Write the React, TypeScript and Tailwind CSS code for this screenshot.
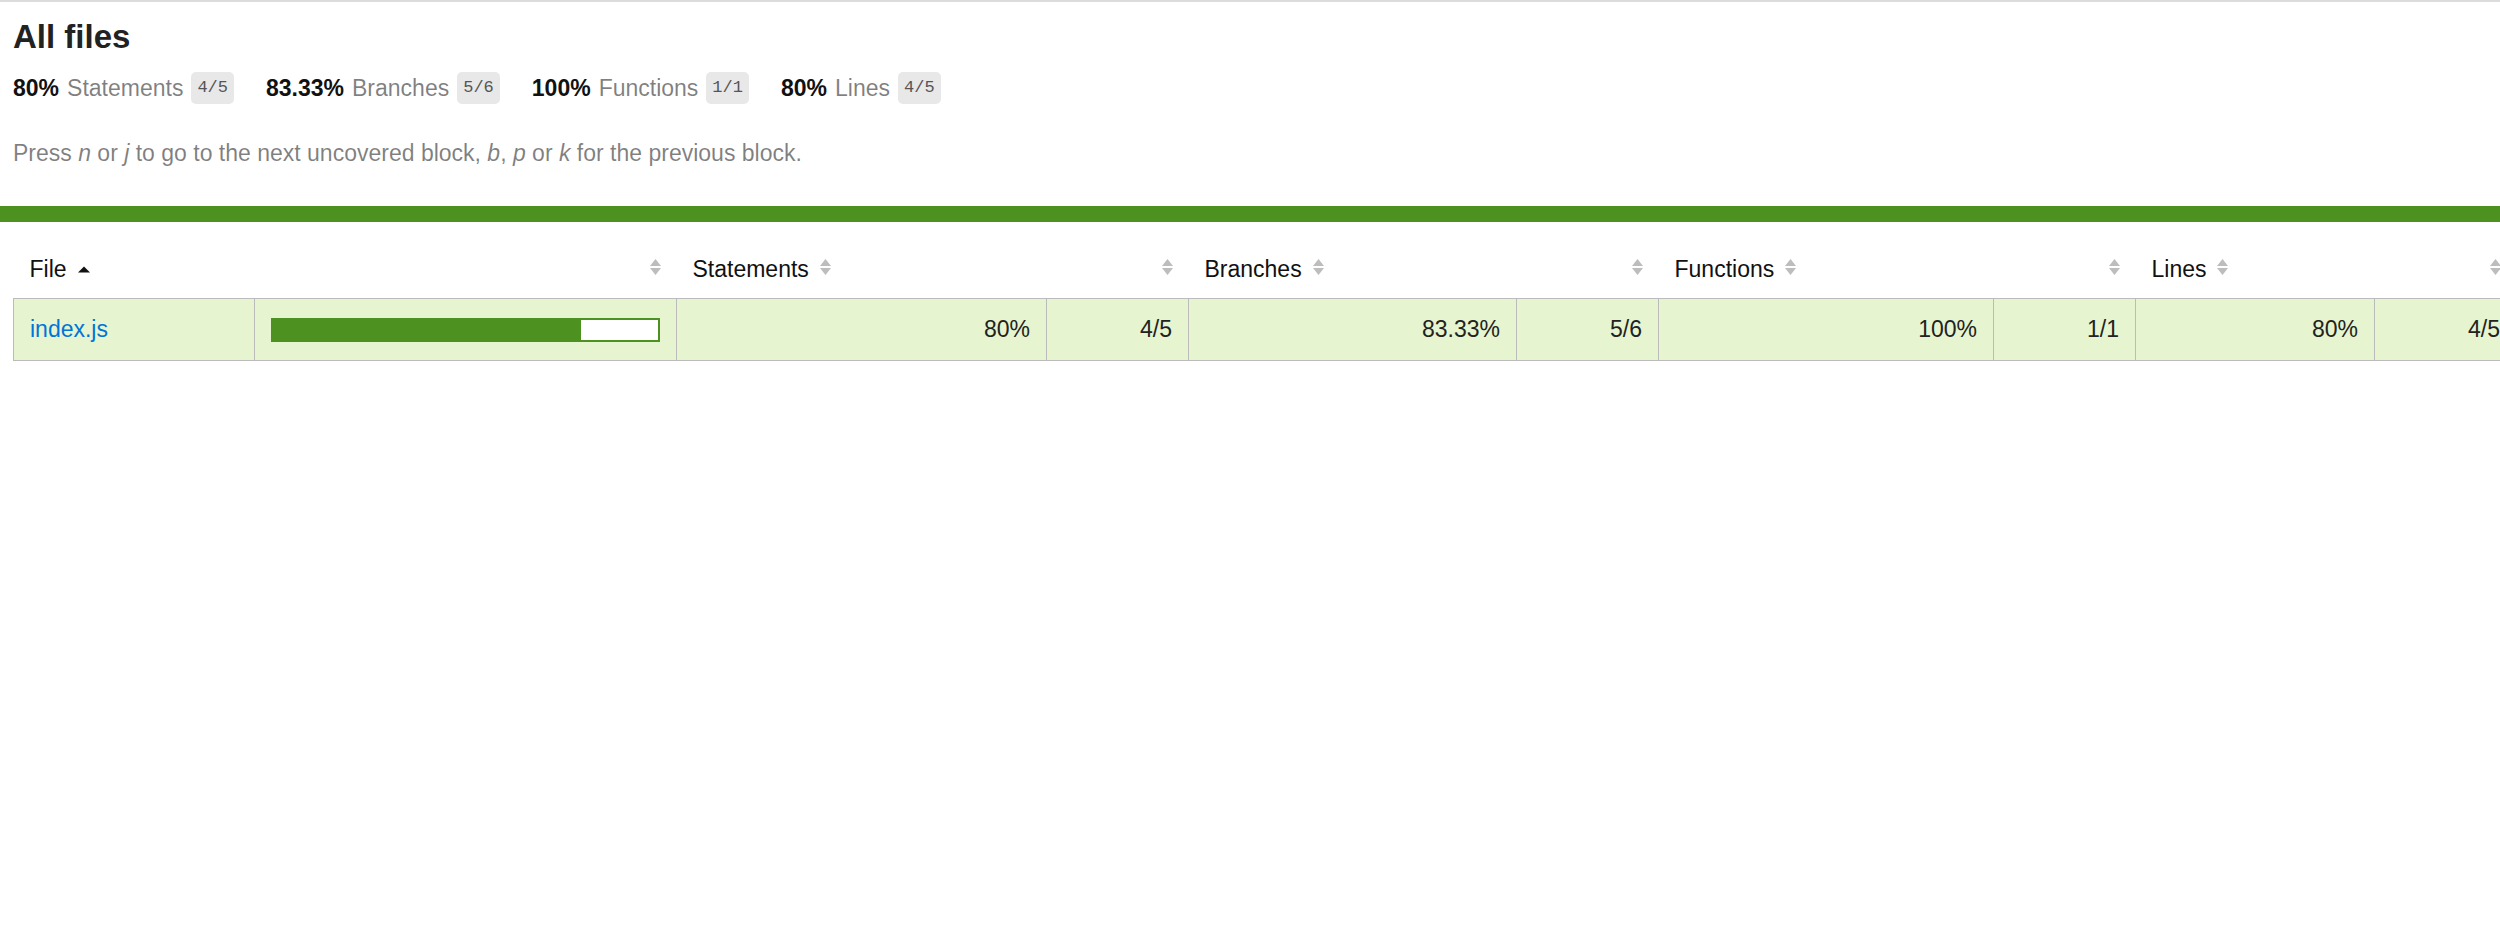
import React from "react";

function Sorter({ active }: { active?: boolean }) {
  if (active) {
    return (
      <svg width="12" height="16" viewBox="0 0 12 16" className="inline-block ml-[11px] align-[2px]">
        <path d="M6 7.5 L12 13.5 L0 13.5 Z" fill="#111" />
      </svg>
    );
  }
  return (
    <svg width="11" height="16" viewBox="0 0 11 16" className="inline-block ml-[11px] align-[2px]">
      <path d="M5.5 0 L11 7 L0 7 Z" fill="#bdbdbd" />
      <path d="M0 9 L11 9 L5.5 16 Z" fill="#bdbdbd" />
    </svg>
  );
}

function Stat({ pct, label, frac }: { pct: string; label: string; frac: string }) {
  return (
    <div className="flex items-center gap-[8px] pr-[32px] h-[32px]">
      <span className="font-bold text-[#111] leading-[26px]">{pct}</span>
      <span className="text-black/50 leading-[26px]">{label}</span>
      <span className="h-[32px] px-[6px] rounded-[5px] bg-[#e8e8e8] text-[#555] text-[17px] leading-[32px] font-['Liberation_Mono',monospace]">
        {frac}
      </span>
    </div>
  );
}

export default function App() {
  const th = "py-[16px] px-[16px] leading-[26px] font-normal whitespace-nowrap text-[#111]";
  const td = "py-[17px] px-[16px] leading-[27px] border-r border-[#bbb] bg-[#e6f5d0] text-[#222] whitespace-nowrap";
  const tdr = td + " text-right";
  return (
    <div className="w-[2500px] min-h-[930px] overflow-hidden bg-white border-t-2 border-[#dcdcdc] font-['Liberation_Sans',Arial,sans-serif] text-[23px] text-[#333]">
      <div className="pl-[13px] pt-[16px] pb-[40px]">
        <h1 className="text-[33px] leading-[38px] font-bold text-[#222]">All files</h1>
        <div className="flex pt-[16px] pb-[16px]">
          <Stat pct="80%" label="Statements" frac="4/5" />
          <Stat pct="83.33%" label="Branches" frac="5/6" />
          <Stat pct="100%" label="Functions" frac="1/1" />
          <Stat pct="80%" label="Lines" frac="4/5" />
        </div>
        <p className="mt-[20px] leading-[26px] text-black/50">
          Press <em>n</em> or <em>j</em> to go to the next uncovered block, <em>b</em>, <em>p</em> or <em>k</em> for the
          previous block.
        </p>
      </div>
      <div className="h-[16px] bg-[#4d9221]" />
      <div className="pl-[13px] pt-[18px]">
        <table className="table-fixed border-collapse w-[2503px]">
          <colgroup>
            <col className="w-[241px]" />
            <col className="w-[422px]" />
            <col className="w-[370px]" />
            <col className="w-[142px]" />
            <col className="w-[328px]" />
            <col className="w-[142px]" />
            <col className="w-[335px]" />
            <col className="w-[142px]" />
            <col className="w-[239px]" />
            <col className="w-[142px]" />
          </colgroup>
          <thead>
            <tr className="border-b border-[#bbb]">
              <th className={th + " text-left"}>
                File
                <Sorter active />
              </th>
              <th className={th + " text-right"}>
                <Sorter />
              </th>
              <th className={th + " text-left"}>
                Statements
                <Sorter />
              </th>
              <th className={th + " text-right"}>
                <Sorter />
              </th>
              <th className={th + " text-left"}>
                Branches
                <Sorter />
              </th>
              <th className={th + " text-right"}>
                <Sorter />
              </th>
              <th className={th + " text-left"}>
                Functions
                <Sorter />
              </th>
              <th className={th + " text-right"}>
                <Sorter />
              </th>
              <th className={th + " text-left"}>
                Lines
                <Sorter />
              </th>
              <th className={th + " text-right"}>
                <Sorter />
              </th>
            </tr>
          </thead>
          <tbody className="border border-[#bbb]">
            <tr className="border-b border-[#bbb]">
              <td className={td + " text-left"}>
                <a href="#" className="text-[#0074d9] no-underline">
                  index.js
                </a>
              </td>
              <td className={td}>
                <div className="flex w-full h-[24px] border-2 border-[#4d9221]">
                  <div className="h-full w-[80%] bg-[#4d9221]" />
                  <div className="h-full w-[20%] bg-white" />
                </div>
              </td>
              <td className={tdr}>80%</td>
              <td className={tdr}>4/5</td>
              <td className={tdr}>83.33%</td>
              <td className={tdr}>5/6</td>
              <td className={tdr}>100%</td>
              <td className={tdr}>1/1</td>
              <td className={tdr}>80%</td>
              <td className="py-[17px] px-[16px] leading-[27px] bg-[#e6f5d0] text-[#222] whitespace-nowrap text-right">4/5</td>
            </tr>
          </tbody>
        </table>
      </div>
    </div>
  );
}
